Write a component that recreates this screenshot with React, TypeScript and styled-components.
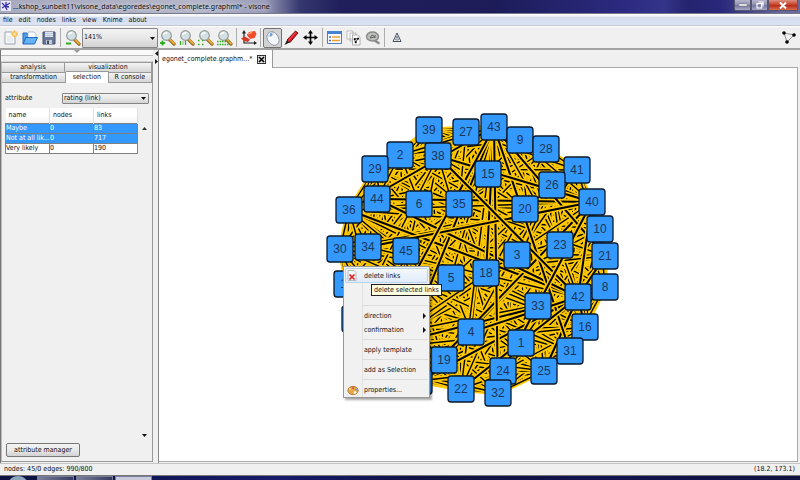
import React from 'react';
import styled, { createGlobalStyle, css } from 'styled-components';

const Global = createGlobalStyle`
  * { box-sizing: border-box; }
  body { margin: 0; background: #f0f0f0; font-family: "DejaVu Sans Condensed", "Noto Sans", sans-serif; font-size: 7px; line-height: 10px; color: #111; }
  button, select { font: inherit; color: inherit; }
`;

const Window = styled.div`
  display: flex;
  flex-direction: column;
  height: 100vh;
  overflow: hidden;
  background: #f0f0f0;
`;

const TitleBar = styled.header`
  display: flex;
  align-items: flex-start;
  flex: none;
  height: 14px;
  padding: 0 2px 0 1px;
  background: linear-gradient(90deg, #a7aabf 0, #b3b5c8 200px, #9a9cba 265px, #35376f 300px, #201f5c 340px, #1d1c59 62%, #2b2a80 78%, #34348a 83%, #25246e 86%, #29277a 90%, #6a6a9c 98%);
  border-bottom: 1px solid #77788c;
`;

const Title = styled.h1`
  flex: 1;
  margin: 0;
  padding-left: 2px;
  font-family: "Noto Sans", sans-serif;
  font-size: 7px;
  line-height: 13px;
  font-weight: 400;
  white-space: nowrap;
  text-shadow: 0 0 4px #ffffff;
`;

const CaptionButton = styled.button<{ $close?: boolean }>`
  display: flex;
  align-items: center;
  justify-content: center;
  width: ${p => (p.$close ? 30 : 17)}px;
  height: 11px;
  padding: 0;
  border: 1px solid #56566e;
  border-top: 0;
  border-radius: 0 0 2px 2px;
  background: ${p => (p.$close ? 'linear-gradient(#dc9181, #c9422c 45%, #b8301c 55%, #d66a50)' : 'linear-gradient(#b5b6cc, #8d8fb0 50%, #7678a0 55%, #a6a8c4)')};
`;

const MenuBar = styled.nav`
  display: flex;
  flex: none;
  gap: 6px;
  height: 12px;
  padding: 0 3px;
  background: linear-gradient(#ffffff 0, #eff2fa 20%, #d4dcee 30%, #dce3f3);
  border-bottom: 1px solid #c2c6d2;
`;

const MenuLink = styled.a`
  color: #111;
  line-height: 12px;
  text-decoration: none;
`;

const ToolBar = styled.div`
  display: flex;
  align-items: center;
  flex: none;
  height: 24px;
  padding: 0 4px 0 1px;
  border-bottom: 2px solid #a2a2a2;
  border-top: 1px solid #fff;
`;

const ToolButton = styled.button<{ $pressed?: boolean }>`
  display: flex;
  align-items: center;
  justify-content: center;
  flex: none;
  width: 19px;
  height: 20px;
  padding: 0;
  border: 1px solid transparent;
  border-radius: 2px;
  background: transparent;
  ${p => p.$pressed && css`
    border-color: #737373;
    background: #d2d2d2;
  `}
`;

const Rule = styled.span`
  flex: none;
  width: 1px;
  height: 19px;
  margin: 0 2px;
  background: #adadad;
`;

const Grow = styled.span`
  flex: 1;
`;

const SelectBox = styled.div<{ $tall?: boolean }>`
  position: relative;
  display: flex;
  flex: none;
  width: ${p => (p.$tall ? 76 : 87)}px;
  height: ${p => (p.$tall ? 20 : 11)}px;
  & > select {
    width: 100%;
    appearance: none;
    padding: 0 10px 0 1px;
    border: 1px solid #858585;
    border-radius: 1px;
    background: linear-gradient(#f3f3f3, #e7e7e7 50%, #d3d3d3);
    line-height: 9px;
  }
  & > svg {
    position: absolute;
    right: 3px;
    top: calc(50% - 1px);
    pointer-events: none;
  }
`;

const Body = styled.main`
  display: flex;
  flex: 1;
  min-height: 0;
`;

const Sidebar = styled.aside`
  display: flex;
  flex-direction: column;
  flex: none;
  width: 153px;
  border-left: 1px solid #777;
`;

const Collapser = styled.div`
  display: flex;
  justify-content: center;
  height: 6px;
  border-bottom: 1px solid #bbb;
  background: #fafafa;
`;

const TabPanel = styled.section`
  display: flex;
  flex-direction: column;
  flex: 1;
  min-height: 0;
  margin: 5px 0 1px;
  border: 1px solid #999;
  border-top-color: #d5d5d5;
  border-left-color: #bbb;
`;

const TabRow = styled.div<{ $front?: boolean }>`
  display: flex;
  flex: none;
  align-items: flex-end;
  height: ${p => (p.$front ? 11 : 10)}px;
  ${p => p.$front && css`border-bottom: 1px solid #999;`}
`;

const Tab = styled.button<{ $w: number; $on?: boolean }>`
  flex: ${p => p.$w} 1 0;
  min-width: 0;
  height: ${p => (p.$on ? 12 : 10)}px;
  margin-bottom: ${p => (p.$on ? -1 : 0)}px;
  padding: 0;
  border: 1px solid #999;
  border-width: 1px 1px 0 0;
  background: ${p => (p.$on ? '#fff' : 'linear-gradient(#f4f4f4, #e5e5e5 50%, #d5d5d5)')};
  line-height: 9px;
  white-space: nowrap;
`;

const PanelBody = styled.div`
  display: flex;
  flex: 1;
  flex-direction: column;
  min-height: 0;
  padding: 8px 3px 4px;
`;

const Field = styled.div`
  display: flex;
  align-items: center;
  justify-content: space-between;
  flex: none;
  height: 14px;
  margin-bottom: 3px;
`;

const TableArea = styled.div`
  display: flex;
  flex: 1;
  justify-content: space-between;
  align-items: flex-start;
  min-height: 0;
`;

const Table = styled.table`
  width: 133px;
  table-layout: fixed;
  border-collapse: collapse;
  line-height: 9px;
  th, td { padding: 0; text-align: left; white-space: nowrap; font-weight: 400; }
  th { height: 15px; padding-left: 3px; background: linear-gradient(#fff 50%, #f3f4f5); border-right: 1px solid #dcdfe3; }
`;

const Row = styled.tr<{ $on?: boolean }>`
  td {
    height: 10px;
    border: 1px solid #808080;
    background: ${p => (p.$on ? '#3399ff' : '#fff')};
    color: ${p => (p.$on ? '#fff' : '#111')};
  }
`;

const ScrollTrack = styled.div`
  display: flex;
  flex-direction: column;
  align-items: center;
  justify-content: space-between;
  width: 9px;
  align-self: stretch;
  padding: 19px 0 2px;
`;

const PushButton = styled.button`
  align-self: flex-start;
  flex: none;
  width: 74px;
  height: 14px;
  margin: 4px 0 0 1px;
  padding: 0;
  border: 1px solid #777;
  border-radius: 2px;
  background: linear-gradient(#f4f4f4, #e9e9e9 50%, #d2d2d2);
`;

const Splitter = styled.div`
  display: flex;
  flex: none;
  width: 6px;
  padding-left: 2px;
  border-right: 1px solid #888;
`;

const Editor = styled.section`
  display: flex;
  flex: 1;
  flex-direction: column;
  min-width: 0;
  margin: 0 2px 1px 0;
`;

const FileTabs = styled.div`
  display: flex;
  flex: none;
  height: 18px;
  border-bottom: 1px solid #aaa;
`;

const FileTab = styled.div`
  display: flex;
  align-items: center;
  justify-content: space-between;
  width: 114px;
  height: 18px;
  padding: 0 6px 0 3px;
  border-right: 1px solid #999;
  background: #fff;
`;

const CloseTab = styled.button`
  display: flex;
  align-items: center;
  justify-content: center;
  width: 9px;
  height: 9px;
  padding: 0;
  border: 1px solid #333;
  background: #ddd;
`;

const Canvas = styled.div`
  position: relative;
  flex: 1;
  min-height: 0;
  overflow: hidden;
  background: #fff;
  border-right: 1px solid #aaa;
  border-bottom: 1px solid #aaa;
  & > svg { display: block; }
`;

const Popup = styled.div`
  position: absolute;
  left: 184px;
  top: 198px;
  width: 87px;
  padding: 1px 1px 0;
  border: 1px solid #979797;
  background: linear-gradient(90deg, #f1f1f1 0 18px, #e0e0e0 18px 19px, #f1f1f1 19px);
  box-shadow: 2px 2px 2px rgba(0, 0, 0, 0.35);
`;

const PopupItem = styled.button<{ $hot?: boolean }>`
  display: grid;
  grid-template-columns: 18px 1fr 4px;
  align-items: center;
  width: 100%;
  height: ${p => (p.$hot ? 15 : 14)}px;
  padding: 0;
  border: 1px solid ${p => (p.$hot ? '#b5d3ef' : 'transparent')};
  border-radius: 2px;
  background: ${p => (p.$hot ? 'linear-gradient(rgba(245,249,255,.8), rgba(220,234,250,.8))' : 'transparent')};
  text-align: left;
  white-space: nowrap;
  & > svg:first-child { margin-left: 1px; }
`;

const Divider = styled.div<{ $tall?: boolean }>`
  height: ${p => (p.$tall ? 23 : 3)}px;
  margin: 0 0 3px 18px;
  border-bottom: 1px solid #dcdcdc;
`;

const Tip = styled.div`
  position: absolute;
  left: 212px;
  top: 216px;
  padding: 0 2px;
  border: 1px solid #222;
  background: #ffffe1;
  line-height: 10px;
  white-space: nowrap;
`;

const Status = styled.footer`
  display: flex;
  justify-content: space-between;
  flex: none;
  height: 12px;
  padding: 0 5px 0 4px;
  border-top: 1px solid #c5c5c5;
`;

const TaskBar = styled.div`
  display: flex;
  flex: none;
  height: 5px;
  padding-left: 7px;
  border-top: 1px solid #777;
  background: linear-gradient(90deg, #0d1240, #171b6a 35%, #10123f 55%, #12144e 75%, #101240);
  overflow: hidden;
`;

const Orb = styled.span`
  width: 22px;
  height: 22px;
  margin-right: 8px;
  border-radius: 50%;
  background: #8ba7bd;
`;

const Task = styled.span<{ $on?: boolean }>`
  display: flex;
  justify-content: center;
  width: 37px;
  height: 5px;
  margin-right: 2px;
  border: 1px solid #777c98;
  border-bottom: 0;
  background: ${p => (p.$on ? '#c9cbdc' : 'linear-gradient(90deg, #7c809c, #363c62)')};
`;

const DownArrow = () => <svg width="5" height="3"><path d="M0 0h5L2.500 3z" fill="#111" /></svg>;
const UpArrow = () => <svg width="5" height="3"><path d="M0 3h5L2.500 0z" fill="#333" /></svg>;
const RightArrow = () => <svg width="3" height="6"><path d="M0 0v6l3-3z" fill="#111" /></svg>;

const Magnifier = ({ mark }: { mark: 'minus' | 'plus' | 'one' | 'fit' | 'all' }) => (
  <svg width="16" height="16" viewBox="0 0 16 16">
    <path d="M9 9l5 5" stroke="#8a6420" strokeWidth="3.200" strokeLinecap="round" />
    <path d="M9.500 9l4.500 4.500" stroke="#eda93a" strokeWidth="2" strokeLinecap="round" />
    <circle cx="6.500" cy="5.500" r="4.800" fill="#d5e0e3" stroke="#929c9c" strokeWidth="1.200" />
    <path d="M3.500 5a3 3 0 0 1 4-2" stroke="#fff" strokeWidth="1.300" fill="none" />
    {mark === 'minus' && <path d="M1 13.500h5" stroke="#2cb01f" strokeWidth="2" />}
    {mark === 'plus' && <path d="M0 13h5M2.500 10.500v5" stroke="#2cb01f" strokeWidth="1.800" />}
    {mark === 'one' && <path d="M1.500 11v4M6.500 11v4M4 11.500v1M4 13.500v1" stroke="#2cb01f" strokeWidth="1.200" />}
    {mark === 'fit' && <path d="M0 10.500h1.500M4 10.500h1.500M0 14.500h1.500M4 14.500h1.500" stroke="#2cb01f" strokeWidth="1.500" />}
    {mark === 'all' && <path d="M0 11.500h13M0 14.500h13" stroke="#2cb01f" strokeWidth="1.500" strokeDasharray="1.500 1" />}
  </svg>
);

const NewIcon = () => (
  <svg width="16" height="16" viewBox="0 0 16 16">
    <path d="M2 2h7l3 3v9H2z" fill="#f8f9fb" stroke="#9aa3b0" />
    <path d="M4 7h5M4 9h6M4 11h6" stroke="#d6dbe4" />
    <circle cx="11.500" cy="4" r="3" fill="#ffc861" />
    <path d="M11.500 .5v7M8 4h7" stroke="#f5b24a" strokeWidth="1" />
    <circle cx="11.500" cy="4" r="1.200" fill="#fff3d0" />
  </svg>
);
const OpenIcon = () => (
  <svg width="16" height="16" viewBox="0 0 16 16">
    <path d="M1 14V3h4l1 1.500h5V8" fill="#4b9be8" stroke="#2a6fc4" />
    <path d="M6 2h6l2 2v5H6z" fill="#fff" stroke="#92aacb" strokeWidth=".7" />
    <path d="M1 14l3-6.500h11.500L12.500 14z" fill="#65b3f6" stroke="#1f69bf" />
  </svg>
);
const SaveIcon = () => (
  <svg width="14" height="14" viewBox="0 0 14 14">
    <path d="M1 1h12v12H1z" fill="#697797" stroke="#46516c" />
    <path d="M3 1h8v5H3z" fill="#dfe6f2" />
    <path d="M3 2.500h8M3 4.500h8" stroke="#a5b3cf" strokeWidth=".7" />
    <path d="M4 9h6v4H4z" fill="#c4cad6" />
    <path d="M5 9.500h2V13H5z" fill="#414b62" />
  </svg>
);
const LayoutIcon = () => (
  <svg width="16" height="16" viewBox="0 0 16 16">
    <path d="M3 2v11h10" stroke="#222" strokeWidth="1.200" fill="none" />
    <path d="M3 0L1 3.500h4zM16 13l-3-2v4z" fill="#222" />
    <path d="M5 6l3-4 6-1 1.500 3-2 4-5 1z" fill="#f04a28" />
    <path d="M7 4l4-1.500" stroke="#ff9a75" strokeWidth="1.500" />
    <path d="M4.500 4.500l4 5" stroke="#fff" strokeWidth="1.300" />
    <path d="M0 8.500l4-2 5 3-2 2.500-4-1z" fill="#d63a25" />
  </svg>
);
const MouseIcon = () => (
  <svg width="14" height="16" viewBox="0 0 14 16">
    <path d="M1.500 4.500C3 1 8 .5 11 5s2.500 7.500 0 9.500-6.500 0-8.500-3-2-5-1-7z" fill="#f3f6fb" stroke="#8a93a6" />
    <path d="M2 5.500c2.500 1.500 5.500.5 5-3.500" fill="none" stroke="#a3adbf" strokeWidth=".8" />
    <ellipse cx="5" cy="4.500" rx="1.200" ry="1.700" fill="#6d9fe6" />
  </svg>
);
const PencilIcon = () => (
  <svg width="15" height="16" viewBox="0 0 15 16">
    <path d="M11.500 1l2.500 2L6 12.500 3 10z" fill="#d9151f" stroke="#6d0a10" strokeWidth=".9" />
    <path d="M3 10l2.500 2.500L.5 15z" fill="#1d1d1d" />
    <path d="M11.500 2.500l-7 8" stroke="#ff6d70" strokeWidth=".8" />
  </svg>
);
const MoveIcon = () => (
  <svg width="15" height="15" viewBox="0 0 15 15">
    <path d="M7.500 2v11M2 7.500h11" stroke="#000" strokeWidth="1.600" />
    <path d="M7.500 0L5 3.500h5zM7.500 15L5 11.500h5zM0 7.500L3.500 5v5zM15 7.500L11.500 5v5z" />
  </svg>
);
const ListIcon = () => (
  <svg width="15" height="13" viewBox="0 0 15 13">
    <path d="M.5.500h14v12H.5z" fill="#f8fafc" stroke="#4a7cc4" />
    <path d="M0 0h15v3H0z" fill="#4682d4" />
    <path d="M2 6h2M2 9.500h2" stroke="#3a6fbe" strokeWidth="1.500" />
    <path d="M5 6h8M5 9.500h8" stroke="#eea12b" strokeWidth="1.700" />
  </svg>
);
const PagesIcon = () => (
  <svg width="15" height="16" viewBox="0 0 15 16">
    <path d="M1 1h6v8H1zM4 3h6v8H4z" fill="#fff" stroke="#aaa" strokeWidth=".8" />
    <path d="M6.500 5h5l2.500 2v8H6.500z" fill="#fff" stroke="#999" strokeWidth=".8" />
    <path d="M8.500 9l3.500-.5-2.500 4z" fill="none" stroke="#222" strokeWidth=".8" />
    <path d="M7.800 8.200h1.800v1.800H7.800zM11.200 7.800H13v1.800h-1.800zM8.800 11.500h1.800v1.800H8.800z" />
  </svg>
);
const LensIcon = () => (
  <svg width="16" height="15" viewBox="0 0 16 15">
    <path d="M9 10l4.500 3" stroke="#8c8c8c" strokeWidth="2.600" strokeLinecap="round" />
    <ellipse cx="7.500" cy="6.500" rx="6" ry="4.500" fill="#bcc1bc" stroke="#8a8a8a" strokeWidth="1.400" />
    <path d="M5 8l2-3 3 2zM10 5v3" fill="none" stroke="#666" />
  </svg>
);
const TriangleIcon = () => (
  <svg width="10" height="11" viewBox="0 0 10 11">
    <path d="M5 1L9 9.500H1z" fill="#fff" stroke="#2d3c50" strokeWidth=".9" />
    <path d="M5 4L6.500 8h-3z" fill="none" stroke="#2d3c50" strokeWidth=".6" />
  </svg>
);
const NetworkIcon = () => (
  <svg width="14" height="13" viewBox="0 0 14 13">
    <path d="M2 2l10 2-7 7z" fill="none" stroke="#777" strokeWidth=".8" />
    <circle cx="2" cy="2" r="1.800" /><circle cx="12" cy="4" r="1.800" /><circle cx="5" cy="11" r="1.800" />
  </svg>
);
const AppIcon = () => (
  <svg width="10" height="12" viewBox="0 0 10 12">
    <path d="M0 1h10v10H0z" fill="#e8e8f8" />
    <path d="M1 3l3 3 5-3M4 6l-3 2M4 6l2 4M4 6l4 1M5 2v3" stroke="#3532aa" strokeWidth="1.300" fill="none" />
  </svg>
);
const DeleteIcon = () => (
  <svg width="10" height="11" viewBox="0 0 10 11">
    <path d="M1 .5h6l2 2v8H1z" fill="#f5f7fb" stroke="#a3acb9" strokeWidth=".8" />
    <path d="M2.500 4.500l5 5M7.500 4.500l-5 5" stroke="#dc2020" strokeWidth="1.700" />
  </svg>
);
const PaletteIcon = () => (
  <svg width="12" height="11" viewBox="0 0 12 11">
    <ellipse cx="6" cy="5.500" rx="5.200" ry="4.200" fill="#e6a64a" stroke="#a56b25" strokeWidth=".7" />
    <circle cx="3" cy="4" r="1.100" fill="#f8dc6c" /><circle cx="6" cy="3" r="1.100" fill="#d84b35" />
    <circle cx="9" cy="4.500" r="1.100" fill="#7a9be0" /><circle cx="8" cy="7.500" r="1.300" fill="#fff" />
  </svg>
);

type Node = [label: string, x: number, y: number];

const nodes: Node[] = [
  ['', 419, 381], ['', 355, 319], ['17', 347, 284], ['', 374, 349], ['', 395, 370], ['', 396, 300], ['', 412, 330],
  ['39', 429, 130], ['27', 466, 132], ['2', 400, 155], ['38', 438, 156], ['29', 375, 169], ['15', 488, 174],
  ['44', 377, 199], ['6', 419, 204], ['35', 459, 204], ['36', 349, 210], ['20', 525, 209], ['43', 494, 127],
  ['9', 520, 140], ['28', 546, 149], ['41', 577, 170], ['26', 552, 185], ['40', 592, 202], ['10', 600, 229],
  ['23', 560, 245], ['21', 605, 256], ['3', 517, 255], ['30', 340, 249], ['34', 368, 247], ['45', 406, 251],
  ['5', 451, 278], ['18', 486, 273], ['8', 605, 287], ['33', 538, 306], ['42', 578, 297], ['16', 585, 327],
  ['4', 471, 332], ['31', 570, 351], ['1', 521, 343], ['19', 444, 360], ['24', 503, 371], ['25', 544, 371],
  ['22', 461, 389], ['32', 498, 393],
];

const isHub = (n: Node) => ['42', '40', '43'].includes(n[0]);
const pairs = nodes.flatMap((a, i) => nodes.slice(i + 1).map((b, j) => ({
  a,
  b,
  rank: ((i * 31 + (i + j + 1) * 17) % 101) + (isHub(a) || isHub(b) ? 25 : 0),
})));
const ordered = [...pairs].sort((p, q) => p.rank - q.rank);
const linePath = ({ a, b }: { a: Node; b: Node }) => `M${a[1]} ${a[2]}L${b[1]} ${b[2]}`;

const NodeLabel = styled.text`
  font: 12px "Liberation Sans", Arial, sans-serif;
  fill: #1b3656;
  text-anchor: middle;
`;

const Graph = () => (
  <svg width="632" height="392" viewBox="159 68 632 392" role="img" aria-label="Network with 45 nodes">
    {ordered.map((p, i) => (
      <g key={i} fill="none">
        <path d={linePath(p)} stroke="#ffc800" strokeWidth="5" />
        <path d={linePath(p)} stroke="#000" strokeWidth={p.rank > 105 ? 2 : 1.400} />
      </g>
    ))}
    {nodes.map(([label, x, y], i) => (
      <g key={i}>
        <rect x={x - 13} y={y - 13} width="26" height="26" rx="3" fill="#3399ff" stroke="#0a1a2c" strokeWidth="1.300" />
        {label && <NodeLabel x={x} y={y + 4}>{label}</NodeLabel>}
      </g>
    ))}
  </svg>
);

const rows = [
  { name: 'Maybe', nodes: 0, links: 83, on: true },
  { name: 'Not at all lik...', nodes: 0, links: 717, on: true },
  { name: 'Very likely', nodes: 0, links: 190, on: false },
];

export default function App() {
  return (
    <>
      <Global />
      <Window>
        <TitleBar>
          <AppIcon />
          <Title>...kshop_sunbelt11\visone_data\egoredes\egonet_complete.graphml* - visone</Title>
          <CaptionButton aria-label="Minimize"><svg width="8" height="4"><path d="M0 1h8v2H0z" fill="#fff" stroke="#555" strokeWidth=".4" /></svg></CaptionButton>
          <CaptionButton aria-label="Restore"><svg width="8" height="8"><path d="M2.500 1h4.500v4.500M1 2.500h4.500V7H1z" fill="none" stroke="#fff" strokeWidth="1.200" /></svg></CaptionButton>
          <CaptionButton $close aria-label="Close"><svg width="8" height="7"><path d="M1 .5l6 6M7 .5l-6 6" stroke="#fff" strokeWidth="2" /></svg></CaptionButton>
        </TitleBar>
        <MenuBar>
          {['file', 'edit', 'nodes', 'links', 'view', 'Knime', 'about'].map(m => <MenuLink key={m} href="#">{m}</MenuLink>)}
        </MenuBar>
        <ToolBar>
          <ToolButton aria-label="New"><NewIcon /></ToolButton>
          <ToolButton aria-label="Open"><OpenIcon /></ToolButton>
          <ToolButton aria-label="Save"><SaveIcon /></ToolButton>
          <Rule />
          <ToolButton aria-label="Zoom out"><Magnifier mark="minus" /></ToolButton>
          <SelectBox $tall>
            <select aria-label="Zoom" defaultValue="141%"><option>141%</option></select>
            <DownArrow />
          </SelectBox>
          <ToolButton aria-label="Zoom in"><Magnifier mark="plus" /></ToolButton>
          <ToolButton aria-label="Actual size"><Magnifier mark="one" /></ToolButton>
          <ToolButton aria-label="Zoom to selection"><Magnifier mark="fit" /></ToolButton>
          <ToolButton aria-label="Fit all"><Magnifier mark="all" /></ToolButton>
          <Rule />
          <ToolButton aria-label="Layout"><LayoutIcon /></ToolButton>
          <Rule />
          <ToolButton $pressed aria-label="Select"><MouseIcon /></ToolButton>
          <ToolButton aria-label="Draw"><PencilIcon /></ToolButton>
          <ToolButton aria-label="Move"><MoveIcon /></ToolButton>
          <Rule />
          <ToolButton aria-label="Attributes"><ListIcon /></ToolButton>
          <ToolButton aria-label="Copy network"><PagesIcon /></ToolButton>
          <ToolButton aria-label="Inspect"><LensIcon /></ToolButton>
          <Rule />
          <ToolButton aria-label="Analyze"><TriangleIcon /></ToolButton>
          <Grow />
          <NetworkIcon />
        </ToolBar>
        <Body>
          <Sidebar>
            <Collapser><svg width="6" height="3"><path d="M0 0h6L3 3z" fill="#999" /></svg></Collapser>
            <TabPanel>
              <TabRow>
                <Tab $w={62}>analysis</Tab>
                <Tab $w={86}>visualization</Tab>
              </TabRow>
              <TabRow $front>
                <Tab $w={64}>transformation</Tab>
                <Tab $w={42} $on>selection</Tab>
                <Tab $w={43}>R console</Tab>
              </TabRow>
              <PanelBody>
                <Field>
                  <label htmlFor="attribute">attribute</label>
                  <SelectBox>
                    <select id="attribute" defaultValue="rating (link)"><option>rating (link)</option></select>
                    <DownArrow />
                  </SelectBox>
                </Field>
                <TableArea>
                  <Table>
                    <thead><tr><th>name</th><th>nodes</th><th>links</th></tr></thead>
                    <tbody>
                      {rows.map(r => (
                        <Row key={r.name} $on={r.on}><td>{r.name}</td><td>{r.nodes}</td><td>{r.links}</td></Row>
                      ))}
                    </tbody>
                  </Table>
                  <ScrollTrack><UpArrow /><DownArrow /></ScrollTrack>
                </TableArea>
                <PushButton>attribute manager</PushButton>
              </PanelBody>
            </TabPanel>
          </Sidebar>
          <Splitter><svg width="3" height="16"><path d="M3 1v5L0 3.500zM0 9v5l3-2.500z" fill="#111" /></svg></Splitter>
          <Editor>
            <FileTabs>
              <FileTab>egonet_complete.graphm...*<CloseTab aria-label="Close tab"><svg width="7" height="7"><path d="M1 1l5 5M6 1L1 6" stroke="#000" strokeWidth="1.600" /></svg></CloseTab></FileTab>
            </FileTabs>
            <Canvas>
              <Graph />
              <Popup role="menu">
                <PopupItem $hot><DeleteIcon /><span>delete links</span></PopupItem>
                <Divider $tall />
                <PopupItem><i /><span>direction</span><RightArrow /></PopupItem>
                <PopupItem><i /><span>confirmation</span><RightArrow /></PopupItem>
                <Divider />
                <PopupItem><i /><span>apply template</span></PopupItem>
                <Divider />
                <PopupItem><i /><span>add as Selection</span></PopupItem>
                <Divider />
                <PopupItem><PaletteIcon /><span>properties...</span></PopupItem>
              </Popup>
              <Tip role="tooltip">delete selected links</Tip>
            </Canvas>
          </Editor>
        </Body>
        <Status><span>nodes: 45/0 edges: 990/800</span><span>(18.2, 173.1)</span></Status>
        <TaskBar><Orb /><Task /><Task /><Task $on /></TaskBar>
      </Window>
    </>
  );
}
